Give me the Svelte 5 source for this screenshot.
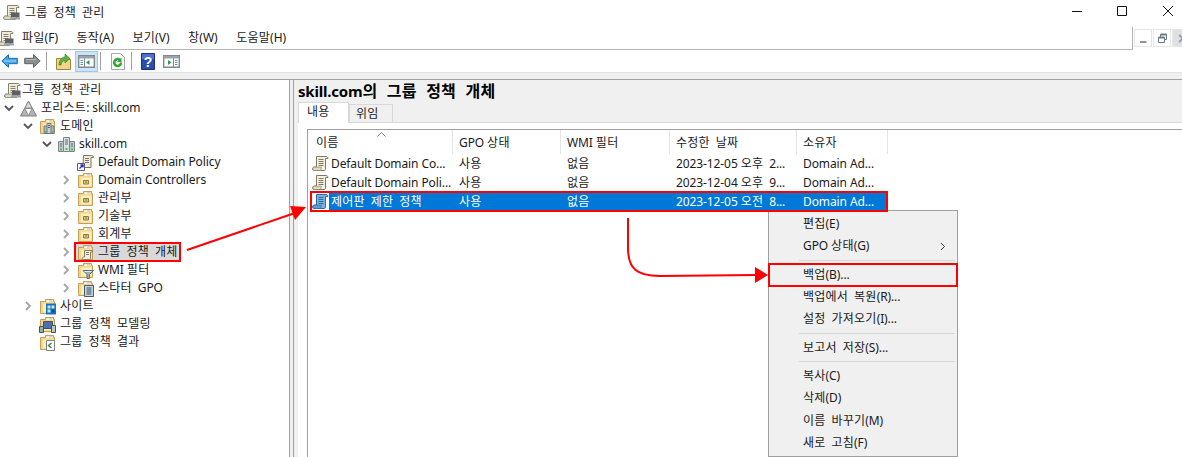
<script>
  const menus = ['파일(F)', '동작(A)', '보기(V)', '창(W)', '도움말(H)'];
  const tree = [
    { label: '그룹 정책 관리', depth: 0, icon: 'scroll', exp: '', root: true },
    { label: '포리스트: skill.com', depth: 0, icon: 'forest', exp: 'open' },
    { label: '도메인', depth: 1, icon: 'domains', exp: 'open' },
    { label: 'skill.com', depth: 2, icon: 'domain', exp: 'open' },
    { label: 'Default Domain Policy', depth: 3, icon: 'link', exp: '' },
    { label: 'Domain Controllers', depth: 3, icon: 'ou', exp: 'closed' },
    { label: '관리부', depth: 3, icon: 'ou', exp: 'closed' },
    { label: '기술부', depth: 3, icon: 'ou', exp: 'closed' },
    { label: '회계부', depth: 3, icon: 'ou', exp: 'closed' },
    { label: '그룹 정책 개체', depth: 3, icon: 'gpo', exp: 'closed', sel: true },
    { label: 'WMI 필터', depth: 3, icon: 'wmi', exp: 'closed' },
    { label: '스타터 GPO', depth: 3, icon: 'starter', exp: 'closed' },
    { label: '사이트', depth: 1, icon: 'site', exp: 'closed' },
    { label: '그룹 정책 모델링', depth: 1, icon: 'model', exp: '' },
    { label: '그룹 정책 결과', depth: 1, icon: 'result', exp: '' }
  ];
  const cols = ['이름', 'GPO 상태', 'WMI 필터', '수정한 날짜', '소유자'];
  const rows = [
    ['Default Domain Co...', '사용', '없음', '2023-12-05 오후 2...', 'Domain Ad...'],
    ['Default Domain Poli...', '사용', '없음', '2023-12-04 오후 9...', 'Domain Ad...'],
    ['제어판 제한 정책', '사용', '없음', '2023-12-05 오전 8...', 'Domain Ad...']
  ];
  const menu = [
    { t: '편집(E)' }, { t: 'GPO 상태(G)', sub: true }, { sep: true },
    { t: '백업(B)...', mark: true }, { t: '백업에서 복원(R)...' }, { t: '설정 가져오기(I)...' }, { sep: true },
    { t: '보고서 저장(S)...' }, { sep: true },
    { t: '복사(C)' }, { t: '삭제(D)' }, { t: '이름 바꾸기(M)' }, { t: '새로 고침(F)' }
  ];
  const runs = (s) => s.split(/([가-힣][가-힣 ]*)/).filter(Boolean).map((x) => ({ x, k: /[가-힣]/.test(x) }));
</script>

{#snippet tx(s)}<span class="tx">{#each runs(s) as r}{#if r.k}<span class="k">{r.x}</span>{:else}{r.x}{/if}{/each}</span>{/snippet}

{#snippet scrollIcon(fill, line, roll)}
  <path d="M4.500 1.500h9.500c1.200 0 2 .8 2 2h-2.500v10.500c0 1-.7 1.500-1.500 1.500H2.500c-1.200 0-2-.7-2-1.700 0-1 .8-1.800 2-1.800h2z" fill={fill} stroke={line} />
  <path d="M.8 13.500c.3-1 1.200-1.300 2-1.300h6.700c-.7.800-.7 2.300 0 3.300H2.500c-1 0-1.700-.8-1.700-2z" fill={roll} stroke={line} stroke-width=".6" />
  <path d="M6.500 4.500h5M6.500 6.500h5M6.500 8.500h5M6.500 10.500h5" stroke={line} />
{/snippet}

{#snippet folder()}
  <path d="M1.500 3.500H6.500V1.500H14.500V3.500H15.500V15.500H1.500z" fill="#f3d68a" stroke="#c2a05a" />
  <path d="M7.500 2.500h6v1.500h-6z" fill="#fff" />
  <path d="M10 2.500h3v1h-3z" fill="#8fc6de" />
  <path d="M4 5.500h10.500v9H4z" fill="#fdeebd" />
{/snippet}

{#snippet icon(kind)}
  <svg class="ico" viewBox="0 0 17 17" width="17" height="17">
    {#if kind === 'scroll'}
      {@render scrollIcon('#f1ecdb', '#85826f', '#dcd7bf')}
      <path d="M8 8.500h8.500v5H8z" fill="#5b6166" />
      <path d="M7 13.500h10v2H7z" fill="#a2a5a7" />
    {:else if kind === 'forest'}
      <path d="M8.500 1L16.500 16H.5z" fill="#b3b3b3" stroke="#808080" />
      <path d="M8.500 2.500L11 7H6z" fill="#d9d9d9" />
      <path d="M4.700 8.500h7.600L8.500 15.500z" fill="#f7f7f7" stroke="#8c8c8c" />
    {:else if kind === 'domains'}
      {@render folder()}
      <path d="M5 8h4v7.500H5zM11 8h4v7.500h-4z" fill="#aeb6ba" stroke="#6f787d" />
      <path d="M8 5.500h4v10H8z" fill="#ccd2d4" stroke="#6f787d" />
      <path d="M9 7.500h2M9 9.500h2" stroke="#596166" />
      <path d="M6 14h1.500M12.500 14H14" stroke="#39c239" stroke-width="1.500" />
    {:else if kind === 'domain'}
      <path d="M.5 5.500h5v10h-5zM11.500 5.500h5v10h-5z" fill="#c3c9cb" stroke="#7c8487" />
      <path d="M5.500 1.500h6v14h-6z" fill="#dadfe0" stroke="#7c8487" />
      <path d="M7 4h3M7 6h3M7 8h3M2 8h2M13 8h2M2 10h2M13 10h2" stroke="#61686b" />
      <path d="M2 13.500h2M13 13.500h2M7.500 13h2" stroke="#2fcf3f" stroke-width="2" />
    {:else if kind === 'link'}
      <path d="M6.500 1.500h8c1 0 2 .8 2 2h-2.500v10H6z" fill="#f1ecdb" stroke="#79755f" />
      <path d="M8 4.500h4M8 6.500h4M8 8.500h4" stroke="#79755f" />
      <path d="M.5 9.500h7v7h-7z" fill="#fff" stroke="#59597f" />
      <path d="M2.500 14.500L5.500 11.500M3.500 11h2.500v2.500" stroke="#2727b5" fill="none" stroke-width="1.300" />
    {:else if kind === 'ou'}
      {@render folder()}
      <path d="M6.500 8.500h5v3.500h-5z" fill="#d9c68a" stroke="#8d7a3e" />
      <path d="M8 10h2" stroke="#8d7a3e" />
    {:else if kind === 'gpo'}
      {@render folder()}
      <path d="M7.500 6.500h8v1.500h-2v6.500c0 .6-.4 1-1 1H6.500c-.8 0-1.300-.6-1.300-1.200s.5-1.300 1.300-1.300h1z" fill="#f4efdc" stroke="#85806a" />
      <path d="M9 8.500h3M9 10.500h3" stroke="#85806a" />
    {:else if kind === 'wmi'}
      {@render folder()}
      <path d="M6 8.500h10.500l-4 4v4h-2.500v-4z" fill="#a3afb6" stroke="#5c6a72" />
      <path d="M7.500 9.500h7" stroke="#e6edf0" />
    {:else if kind === 'starter'}
      {@render folder()}
      <path d="M7.500 5.500h9v11h-9z" fill="#c9d5de" stroke="#47596a" />
      <path d="M9.500 8h5M9.500 10h5M9.500 12h5M9.500 14h5" stroke="#2e4d6d" />
    {:else if kind === 'site'}
      {@render folder()}
      <path d="M7 5.500h10v11H7z" fill="#1874b8" />
      <path d="M8.500 7.500h3v3h-3zM12.500 7.500h3v3h-3zM8.500 11.500h3v3h-3z" fill="#bfe4f8" />
      <path d="M12.500 11.500h3v3h-3z" fill="#0d4f86" />
    {:else if kind === 'model'}
      {@render folder()}
      <path d="M4.500 5.500h9v7h-9z" fill="#4f6fb2" stroke="#4a4f55" />
      <path d="M.5 10.500h4v6h-4z" fill="#9fb0ae" stroke="#4a4f55" />
      <path d="M12.500 9.500h4v7h-4z" fill="#b7c6c8" stroke="#4a4f55" />
      <path d="M1.500 14h2" stroke="#39c239" />
    {:else if kind === 'result'}
      {@render folder()}
      <path d="M7.500 6.500h8v10h-8z" fill="#fff" stroke="#7a7f84" />
      <path d="M12.500 9l-3 2.500 3 2.500" stroke="#2a8a3a" fill="none" stroke-width="1.400" />
    {/if}
  </svg>
{/snippet}

<div class="window">
  <header class="title">
    <span class="title-left">{@render icon('scroll')}{@render tx('그룹 정책 관리')}</span>
    <div class="winbtns">
      <svg class="min" viewBox="0 0 10 10" width="10" height="10"><path d="M0 5.500h10" stroke="#111" /></svg>
      <svg viewBox="0 0 10 10" width="10" height="10"><path d="M.5.500h9v9h-9z" fill="none" stroke="#111" /></svg>
      <svg viewBox="0 0 10 10" width="10" height="10"><path d="M0 0l10 10M10 0L0 10" stroke="#111" /></svg>
    </div>
  </header>

  <nav class="menubar">
    <span class="menu-icon">{@render icon('scroll')}</span>
    {#each menus as m}<span class="menu-item">{@render tx(m)}</span>{/each}
    <div class="mdi">
      <span class="mdi-btn"><svg viewBox="0 0 15 15" width="15" height="15"><path d="M4 10h6.500v2H4z" fill="#8b97a3" /></svg></span>
      <span class="mdi-btn"><svg viewBox="0 0 15 15" width="15" height="15"><path d="M5.500 3.500h6v5h-6z" fill="none" stroke="#6c7a88" /><path d="M3.500 6.500h6v5h-6z" fill="#fff" stroke="#6c7a88" /><path d="M5.500 3.500h6M3.500 6.500h6" stroke="#6c7a88" stroke-width="2" /></svg></span>
      <span class="mdi-btn off"><svg viewBox="0 0 15 15" width="15" height="15"><path d="M5 4l4 3.500L5 11" fill="none" stroke="#98a2ab" stroke-width="2" /></svg></span>
    </div>
  </nav>

  <div class="toolbar">
    <span class="tb m6"><svg viewBox="0 0 17 14" width="17" height="14"><path d="M.8 7L7.500.7v3.600h8.800v5.400H7.500v3.600z" fill="#45a6ea" stroke="#1b70b8" /><path d="M3 7h12" stroke="#a5d8f8" /></svg></span>
    <span class="tb m5"><svg viewBox="0 0 17 14" width="17" height="14"><path d="M16.200 7L9.500.7v3.600H.7v5.400h8.800v3.600z" fill="#8a8f92" stroke="#5f6366" /><path d="M2 5.500h10" stroke="#b7babc" /></svg></span>
    <i class="tsep m9"></i>
    <span class="tb m4"><svg viewBox="0 0 15 17" width="15" height="17"><path d="M.5 5.500h5l1 1h8v10H.5z" fill="#f0d68c" stroke="#a5833c" /><path d="M3 12C3 7 6 4 9 4V1l5 4.500-5 4.500V7.500C7 7.500 5.500 9 5 12z" fill="#5cb53c" stroke="#2d7a1d" stroke-width=".6" /></svg></span>
    <span class="tb active m2"><svg viewBox="0 0 17 13" width="17" height="13"><path d="M.7.700h15.600v11.600H.7z" fill="#fff" stroke="#818a90" stroke-width="1.400" /><path d="M1 1h15v2.500H1z" fill="#9aa3a9" /><path d="M6.500 3v9" stroke="#818a90" /><path d="M2.500 5.500h2.500M2.500 7.500h2.500M2.500 9.500h2.500" stroke="#5b92c4" /><path d="M11.500 5l-3.500 2.500L11.500 10z" fill="#2f9e44" /></svg></span>
    <i class="tsep m10"></i>
    <span class="tb m6"><svg viewBox="0 0 14 17" width="14" height="17"><path d="M.5.500h9l4 4v12H.5z" fill="#fff" stroke="#a3a8ab" /><path d="M10 9.500a3.400 3.400 0 1 1-1.200-2.600" fill="none" stroke="#2fa52f" stroke-width="2.500" /><path d="M10.500 4.500v4.500H6z" fill="#2fa52f" /></svg></span>
    <i class="tsep m9"></i>
    <span class="tb m8"><svg viewBox="0 0 14 17" width="14" height="17"><path d="M.5.500h13v16H.5z" fill="#2b4cb0" stroke="#1d2f73" /><path d="M1 1h12v5H1z" fill="#4f6fd0" /><text x="7" y="13.500" text-anchor="middle" class="help">?</text></svg></span>
    <span class="tb"><svg viewBox="0 0 17 13" width="17" height="13"><path d="M.7.700h15.600v11.600H.7z" fill="#fff" stroke="#818a90" stroke-width="1.400" /><path d="M1 1h15v2.500H1z" fill="#9aa3a9" /><path d="M10.500 3v9" stroke="#818a90" /><path d="M12 5.500h2.500M12 7.500h2.500M12 9.500h2.500" stroke="#5b92c4" /><path d="M5 5l3.500 2.500L5 10z" fill="#2f9e44" /></svg></span>
  </div>

  <div class="band"></div>

  <main class="split">
    <aside class="tree">
      {#each tree as n}
        <div class="node" class:root={n.root} style="padding-left:{n.root ? 4 : n.depth * 19 + 6}px">
          {#if !n.root}
            <span class="exp">
              {#if n.exp === 'open'}
                <svg viewBox="0 0 10 10" width="10" height="10"><path d="M1 3l4 4 4-4" fill="none" stroke="#555" stroke-width="1.800" /></svg>
              {:else if n.exp === 'closed'}
                <svg viewBox="0 0 10 10" width="10" height="10"><path d="M3 1l4 4-4 4" fill="none" stroke="#a6a6a6" stroke-width="1.800" /></svg>
              {/if}
            </span>
          {/if}
          <span class="pick" class:sel={n.sel}>
            {@render icon(n.icon)}
            <span class="lbl">{@render tx(n.label)}</span>
          </span>
        </div>
      {/each}
    </aside>
    <div class="splitter"></div>
    <section class="detail">
      <h1>{@render tx('skill.com의 그룹 정책 개체')}</h1>
      <div class="tabs">
        <span class="tab on">{@render tx('내용')}</span>
        <span class="tab">{@render tx('위임')}</span>
      </div>
      <div class="tabbody">
        <div class="list">
          <div class="lrow head">
            {#each cols as c}<span class="cell">{@render tx(c)}</span>{/each}
            <svg class="sort" viewBox="0 0 9 5" width="9" height="5"><path d="M.5 4.500l4-4 4 4" fill="none" stroke="#777" /></svg>
          </div>
          {#each rows as r, i}
            <div class="lrow item" class:picked={i === 2}>
              <span class="cell first">
                <svg class="ico" viewBox="0 0 17 17" width="17" height="17">
                  {#if i === 2}
                    {@render scrollIcon('#7fb2dc', '#2c6aa3', '#5f9ccf')}
                  {:else}
                    {@render scrollIcon('#f7f2df', '#7d7862', '#e4dcbc')}
                  {/if}
                </svg>
                {@render tx(r[0])}
              </span>
              {#each r.slice(1) as v}<span class="cell">{@render tx(v)}</span>{/each}
            </div>
          {/each}
        </div>
      </div>
    </section>
  </main>

  <div class="ctx">
    {#each menu as m}
      {#if m.sep}
        <div class="ctx-sep"></div>
      {:else}
        <div class="ctx-item" class:mark={m.mark}>
          {@render tx(m.t)}
          {#if m.sub}<svg viewBox="0 0 6 9" width="6" height="9"><path d="M1 1l3.500 3.500L1 8" fill="none" stroke="#333" /></svg>{/if}
        </div>
      {/if}
    {/each}
  </div>

  <svg class="notes" viewBox="0 0 1182 457" width="1182" height="457">
    <path d="M187 250L295 213" stroke="#f00" stroke-width="2" fill="none" />
    <path d="M306 207L290 206L295 220z" fill="#f00" />
    <rect x="311" y="192" width="576" height="19" fill="none" stroke="#f00" stroke-width="2" />
    <path d="M628 218V248C628 268 636 276 660 276L757 275" stroke="#f00" stroke-width="2" fill="none" />
    <path d="M768 275L755 267V283z" fill="#f00" />
  </svg>
</div>

<style>
  :global(body) { margin: 0; background: #fff; }
  .window {
    position: relative; width: 1182px; height: 457px; overflow: hidden; background: #fff;
    font: 12px/18px "Noto Sans", "Noto Sans CJK KR", sans-serif; color: #1a1a1a; letter-spacing: -.1px;
    display: flex; flex-direction: column;
  }
  .tx { white-space: pre; }
  .k { word-spacing: 2.500px; letter-spacing: .25px; }
  .ico { flex: none; display: block; }
  .title { height: 27px; display: flex; align-items: center; justify-content: space-between; box-sizing: border-box; padding: 0 9px 5px 3px; }
  .title-left { display: flex; gap: 5px; align-items: center; margin-top: 3px; }
  .winbtns { display: flex; gap: 36px; align-items: center; }
  .min { margin-right: -1px; }
  .menubar { height: 23px; box-sizing: border-box; border-bottom: 1px solid #b4b4b4; display: flex; align-items: center; position: relative; letter-spacing: 0; }
  .menu-icon { width: 22px; margin-left: -3px; margin-right: 3px; }
  .menu-item { margin-right: 18.500px; }
  .mdi { margin-left: auto; flex: none; width: 50px; box-sizing: border-box; overflow: hidden; display: flex; gap: 1px; align-self: stretch; background: #fff; margin-bottom: -1px; padding: 2px 0 0 1px; border-left: 1px solid #b4b4b4; }
  .mdi-btn { flex: none; width: 18px; height: 18px; box-sizing: border-box; border: 1px solid #e6e6e6; display: flex; align-items: center; justify-content: center; }
  .mdi-btn.off { background: #e0e0e0; }
  .toolbar { height: 22px; display: flex; align-items: center; padding-left: 1px; }
  .tb { display: flex; align-items: center; justify-content: center; height: 22px; }
  .tb.active { box-sizing: border-box; width: 23px; height: 21px; background: #cce4f7; outline: 1px solid #99c9ef; outline-offset: -1px; }
  .m2 { margin-right: 2px; } .m4 { margin-right: 4px; } .m5 { margin-right: 5px; } .m6 { margin-right: 6px; }
  .m8 { margin-right: 8px; } .m9 { margin-right: 9px; } .m10 { margin-right: 10px; }
  .tsep { width: 1px; height: 18px; background: #a0a0a0; }
  .band { height: 8px; background: #f0f0f0; border-top: 1px solid #e0e0e0; border-bottom: 1px solid #a0a0a0; box-sizing: border-box; }
  .split { flex: 1; display: flex; min-height: 0; }
  .tree { width: 289px; box-sizing: border-box; padding-top: 1px; }
  .node { height: 18px; display: flex; align-items: center; }
  .exp { width: 14px; flex: none; display: flex; margin-left: -2px; margin-right: 2px; }
  .pick { display: flex; align-items: center; height: 18px; }
  .lbl { margin-left: 4px; white-space: nowrap; }
  .root .lbl { margin-left: 1px; }
  .pick.sel { background: #d9d9d9; outline: 2px solid #f00; outline-offset: -1px; margin-left: -2px; padding: 0 3px 0 2px; }
  .splitter { width: 5px; background: #f0f0f0; border-left: 1px solid #a0a0a0; border-right: 1px solid #a0a0a0; box-sizing: border-box; }
  .detail { flex: 1; background: #f0f0f0; display: flex; flex-direction: column; padding-left: 4px; min-width: 0; }
  h1 { margin: 0; font-size: 15px; font-weight: 700; line-height: 22px; color: #000; letter-spacing: -.2px; }
  h1 .k { font-size: 16px; word-spacing: 5px; letter-spacing: .25px; }
  .tabs { display: flex; align-items: flex-end; height: 20px; position: relative; z-index: 1; }
  .tab { width: 44px; height: 18px; display: flex; align-items: center; padding-left: 6px; background: #f0f0f0; border: 1px solid #d9d9d9; border-bottom: 0; box-sizing: border-box; }
  .tab.on { width: 51px; height: 21px; padding-left: 8px; background: #fff; margin-bottom: -1px; padding-bottom: 2px; }
  .tabbody { flex: 1; background: #fff; border-top: 1px solid #d9d9d9; padding: 6px 0 0 9px; min-height: 0; }
  .list { height: 100%; border-left: 1px solid #a0a0a0; border-top: 1px solid #a0a0a0; background: #fff; }
  .lrow { display: grid; grid-template-columns: 145px 108px 109px 127px 91px; width: 580px; position: relative; }
  .head { height: 24px; align-items: center; }
  .head .cell { border-right: 1px solid #e5e5e5; height: 24px; box-sizing: border-box; display: flex; align-items: center; padding: 2px 0 0 6px; }
  .head .cell:first-child { padding-left: 8px; }
  .sort { position: absolute; left: 69px; top: 2px; }
  .item { height: 19px; align-items: start; }
  .cell { padding: 1px 0 0 6px; white-space: nowrap; overflow: hidden; }
  .first { display: flex; align-items: flex-start; height: 19px; box-sizing: border-box; padding: 0 0 0 4px; gap: 2px; }
  .first .ico { margin-top: 1px; }
  .first .tx { padding-top: 1px; }
  .picked { background: #0078d7; color: #fff; }
  .picked .first { background: linear-gradient(90deg, #fff 21px, transparent 21px); }
  .ctx { position: absolute; left: 768px; top: 210px; width: 190px; height: 247px; box-sizing: border-box; background: #f0f0f0; border: 1px solid #a0a0a0; padding: 2px 0; }
  .ctx-item { height: 22.330px; display: flex; align-items: center; justify-content: space-between; padding: 0 11px 0 34px; }
  .ctx-item.mark { outline: 2px solid #f00; outline-offset: -1px; }
  .ctx-sep { height: 1px; background: #d7d7d7; margin: 2.500px 2px 2.500px 30px; }
  .notes { position: absolute; inset: 0; pointer-events: none; }
  .help { font: 700 14px "Liberation Sans", sans-serif; fill: #fff; }
</style>
